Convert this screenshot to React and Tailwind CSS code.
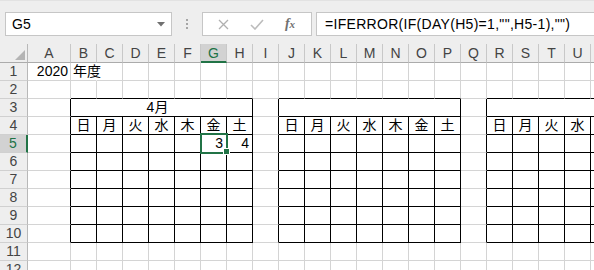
import React from 'react';

const LETTERS = ['A','B','C','D','E','F','G','H','I','J','K','L','M','N','O','P','Q','R','S','T','U','V','W'];
const TABLE_STARTS = [1, 9, 17];
const DAYS = ['日','月','火','水','木','金','土'];
const FONT = { fontFamily: '"Liberation Sans","Noto Sans CJK JP",sans-serif' };

const inTable = (c) => TABLE_STARTS.some((s) => c >= s && c < s + 7);
const isBeforeTable = (c) => TABLE_STARTS.some((s) => c === s - 1);
const tableStartOf = (c) => TABLE_STARTS.find((s) => c >= s && c < s + 7);

function DataCell({ r, c }) {
  const rightBlack = r >= 3 && r <= 10 && (isBeforeTable(c) || (r >= 4 && inTable(c)));
  const bottomBlack = inTable(c) && r >= 2 && r <= 10;
  let content = null;
  let align = 'justify-start pl-[2px]';
  if (r === 1 && c === 0) { content = '2020'; align = 'justify-end pr-[2px]'; }
  if (r === 1 && c === 1) { content = '年度'; align = 'justify-start pl-[2px]'; }
  if (r === 4 && inTable(c)) { content = DAYS[c - tableStartOf(c)]; align = 'justify-center'; }
  if (r === 5 && c === 6) { content = '3'; align = 'justify-end pr-[3px]'; }
  if (r === 5 && c === 7) { content = '4'; align = 'justify-end pr-[3px]'; }
  const hideRight = r === 1 && c === 1;
  return (
    <div
      className={[
        'shrink-0 h-full border-r border-b flex items-end pb-[1px] text-[14px] leading-[16px] text-black whitespace-nowrap',
        c === 0 ? 'w-[43px]' : 'w-[26px]',
        hideRight ? 'border-r-white overflow-visible z-10' : rightBlack ? 'border-r-black' : 'border-r-[#d4d4d4]',
        bottomBlack ? 'border-b-black' : 'border-b-[#d4d4d4]',
        align,
      ].join(' ')}
    >
      {content}
    </div>
  );
}

function Row({ r }) {
  const selected = r === 5;
  const cells = [];
  for (let c = 0; c < LETTERS.length; c++) {
    if (r === 3 && TABLE_STARTS.includes(c)) {
      cells.push(
        <div
          key={c}
          className="shrink-0 h-full w-[182px] border-r border-b border-r-black border-b-black flex items-end justify-center pb-[1px] pr-[8px] text-[14px] leading-[16px] text-black"
        >
          {c === 1 ? '4月' : ''}
        </div>
      );
      c += 6;
      continue;
    }
    cells.push(<DataCell key={c} r={r} c={c} />);
  }
  return (
    <div className="flex h-[18px] shrink-0">
      <div
        className={[
          'shrink-0 w-[28px] h-full border-b border-b-[#d0d0d0] flex items-end justify-center pb-[1px] text-[14px] leading-[16px]',
          selected ? 'bg-[#d2d2d2] border-r-2 border-r-[#217346] text-[#217346]' : 'bg-[#eeeeee] border-r border-r-[#b8b8b8] text-[#444444]',
        ].join(' ')}
      >
        {r}
      </div>
      {cells}
    </div>
  );
}

export default function App() {
  const rows = [1,2,3,4,5,6,7,8,9,10,11,12];
  return (
    <div className="w-[594px] h-[270px] overflow-hidden bg-white relative" style={FONT}>
      {/* formula bar */}
      <div className="h-[44px] bg-[#eeeeee] flex items-start pt-[11px] pl-[5px] border-t border-t-[#e2e2e2]">
        <div className="w-[167px] h-[24px] bg-white border border-[#c6c6c6] flex items-center justify-between pl-[6px] pr-[6px] text-[14px] text-black">
          <span>G5</span>
          <svg width="8" height="5" viewBox="0 0 8 5"><path d="M0 0 L8 0 L4 4.5 Z" fill="#707070" /></svg>
        </div>
        <div className="w-[30px] h-[24px] flex flex-col items-center justify-center gap-[2px]">
          <div className="w-[2px] h-[2px] bg-[#a6a6a6]" />
          <div className="w-[2px] h-[2px] bg-[#a6a6a6]" />
          <div className="w-[2px] h-[2px] bg-[#a6a6a6]" />
        </div>
        <div className="w-[110px] h-[24px] bg-white border border-[#c6c6c6] flex items-center">
          <div className="w-[38px] flex justify-center pl-[2px]">
            <svg width="11" height="11" viewBox="0 0 11 11"><path d="M1 1 L10 10 M10 1 L1 10" stroke="#b0b0b0" strokeWidth="1.3" fill="none" /></svg>
          </div>
          <div className="w-[32px] flex justify-center">
            <svg width="14" height="11" viewBox="0 0 14 11"><path d="M1 6 L5 10 L13 1" stroke="#bcbcbc" strokeWidth="1.6" fill="none" /></svg>
          </div>
          <div className="flex-1 flex justify-center pr-[4px]">
            <span className="italic text-[#707070] text-[14px] leading-none font-bold" style={{ fontFamily: '"Liberation Serif",serif' }}>
              f<span className="text-[11px]">x</span>
            </span>
          </div>
        </div>
        <div className="ml-[4px] flex-1 h-[24px] bg-white border border-r-0 border-[#c6c6c6] flex items-center pl-[8px] text-[14px] text-black tracking-[0.3px] whitespace-nowrap">
          =IFERROR(IF(DAY(H5)=1,"",H5-1),"")
        </div>
      </div>
      {/* column headers */}
      <div className="flex h-[19px]">
        <div className="shrink-0 w-[28px] h-full bg-[#eeeeee] border-r border-b border-r-[#b8b8b8] border-b-[#ababab] flex items-end justify-end pr-[2px] pb-[2px]">
          <svg width="10" height="10" viewBox="0 0 10 10"><path d="M10 0 L10 10 L0 10 Z" fill="#b4b4b4" /></svg>
        </div>
        {LETTERS.map((l, i) => (
          <div
            key={l}
            className={[
              'shrink-0 h-full border-r border-r-[#c8c8c8] flex items-center justify-center text-[14px] leading-none',
              i === 0 ? 'w-[43px]' : 'w-[26px]',
              l === 'G' ? 'bg-[#d2d2d2] border-b-2 border-b-[#217346] text-[#217346]' : 'bg-[#eeeeee] border-b border-b-[#ababab] text-[#444444]',
            ].join(' ')}
          >
            {l}
          </div>
        ))}
      </div>
      {/* grid */}
      <div className="flex flex-col">
        {rows.map((r) => <Row key={r} r={r} />)}
      </div>
      {/* selection */}
      <div className="absolute left-[200px] top-[133px] w-[28px] h-[21px] border-2 border-[#217346]" />
      <div className="absolute left-[223px] top-[148px] w-[7px] h-[7px] bg-[#217346] border border-white" />
    </div>
  );
}
